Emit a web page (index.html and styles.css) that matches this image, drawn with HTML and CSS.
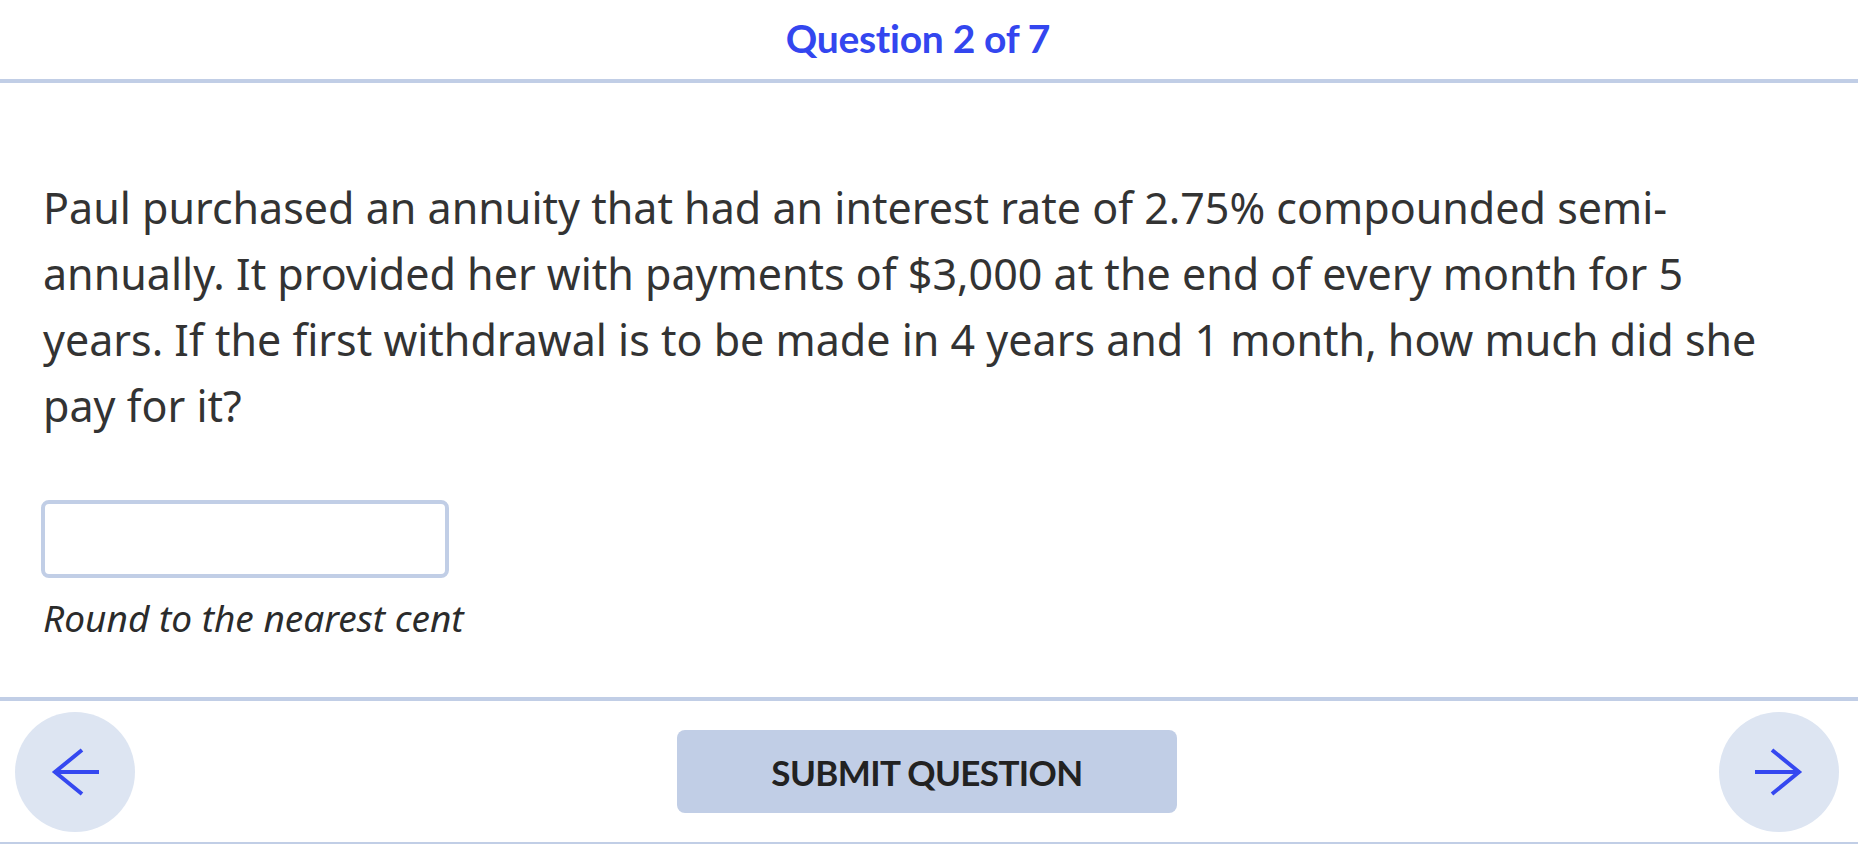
FILE: index.html
```html
<!DOCTYPE html>
<html lang="en">
<head>
<meta charset="utf-8">
<title>Question 2 of 7</title>
<link rel="stylesheet" href="styles.css">
</head>
<body>
<div class="page">
  <header class="header">
    <h1 class="title">Question 2 of 7</h1>
  </header>
  <main class="main">
    <p class="question">Paul purchased an annuity that had an interest rate of 2.75% compounded semi-annually. It provided her with payments of $3,000 at the end of every month for 5 years. If the first withdrawal is to be made in 4 years and 1 month, how much did she pay for it?</p>
    <input class="answer" type="text" aria-label="Answer">
    <p class="hint">Round to the nearest cent</p>
  </main>
  <footer class="footer">
    <button class="nav-btn" aria-label="Previous question">
      <svg width="50" height="50" viewBox="0 0 50 50" fill="none" stroke="currentColor" stroke-width="4" stroke-linecap="butt" stroke-linejoin="miter"><path d="M4 25H49"/><path d="M32 3L5 25L32 47"/></svg>
    </button>
    <button class="submit">SUBMIT QUESTION</button>
    <button class="nav-btn" aria-label="Next question">
      <svg width="50" height="50" viewBox="0 0 50 50" fill="none" stroke="currentColor" stroke-width="4" stroke-linecap="butt" stroke-linejoin="miter"><path d="M46 25H1"/><path d="M18 3L45 25L18 47"/></svg>
    </button>
  </footer>
</div>
</body>
</html>
```

FILE: styles.css
```css
* { box-sizing: border-box; }
html, body { margin: 0; padding: 0; background: #ffffff; }
body { font-family: "Noto Sans", "Open Sans", sans-serif; color: #333333; }
.page { width: 1858px; height: 844px; display: flex; flex-direction: column; overflow: hidden; }

.header {
  height: 83px;
  border-bottom: 4px solid #c1cee6;
  display: flex;
  justify-content: center;
  align-items: flex-start;
  padding: 14px 22px 0 0;
  flex: none;
}
.title {
  margin: 0;
  font-family: Lato, "Liberation Sans", sans-serif;
  font-weight: 700;
  font-size: 39px;
  line-height: 48px;
  letter-spacing: -0.3px;
  color: #3346ef;
}

.main {
  flex: 1;
  padding: 92px 43px 0 43px;
}
.question {
  margin: 0;
  max-width: 1740px;
  font-size: 43px;
  line-height: 66px;
  color: #333333;
}
.answer {
  display: block;
  margin: 61px 0 0 -2px;
  width: 408px;
  height: 78px;
  border: 4px solid #c1cee6;
  border-radius: 8px;
  background: #fff;
  outline: none;
  font-family: inherit;
  font-size: 32px;
  padding: 0 12px;
}
.hint {
  margin: 18px 0 0 0;
  font-style: italic;
  font-size: 37px;
  line-height: 44px;
  color: #2b2b2b;
}

.footer {
  flex: none;
  height: 147px;
  border-top: 4px solid #c1cee6;
  border-bottom: 2px solid #c1cee6;
  display: flex;
  align-items: center;
  justify-content: space-between;
  padding: 0 19px 0 15px;
}
.nav-btn {
  width: 120px;
  height: 120px;
  border-radius: 50%;
  border: none;
  background: #dde5f2;
  color: #3548f0;
  display: flex;
  align-items: center;
  justify-content: center;
  padding: 0;
}
.submit {
  width: 500px;
  height: 83px;
  border: none;
  border-radius: 8px;
  background: #c1cee6;
  color: #222222;
  font-family: Lato, "Liberation Sans", sans-serif;
  font-weight: 700;
  font-size: 35px;
  letter-spacing: -0.6px;
  padding: 0;
}
```
